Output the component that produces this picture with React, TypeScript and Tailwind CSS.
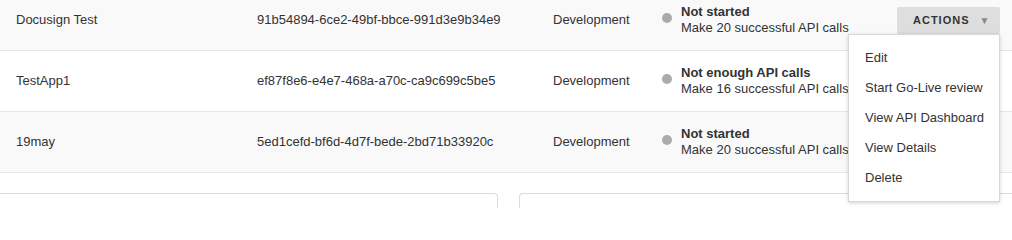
const APPS = [
  { name: 'Docusign Test', id: '91b54894-6ce2-49bf-bbce-991d3e9b34e9', env: 'Development', status: 'Not started', hint: 'Make 20 successful API calls' },
  { name: 'TestApp1', id: 'ef87f8e6-e4e7-468a-a70c-ca9c699c5be5', env: 'Development', status: 'Not enough API calls', hint: 'Make 16 successful API calls' },
  { name: '19may', id: '5ed1cefd-bf6d-4d7f-bede-2bd71b33920c', env: 'Development', status: 'Not started', hint: 'Make 20 successful API calls' },
];

const MENU = ['Edit', 'Start Go-Live review', 'View API Dashboard', 'View Details', 'Delete'];

function ActionsMenu() {
  return (
    <div className="relative">
      <button className="flex h-[27px] w-[103px] items-center gap-[10px] rounded-[2px] bg-[#dedede] pl-4 text-[11px] font-bold tracking-[1px] text-[#333]">
        ACTIONS
        <span className="text-[10px] text-[#888]">▼</span>
      </button>
      {/* dropdown open */}
      <div className="absolute right-0 top-[27px] z-10 w-[152px] border border-[#d8d8d8] bg-white py-[8px] shadow-[0_1px_4px_rgba(0,0,0,0.18)]">
        {MENU.map((item) => (
          <div key={item} className="flex h-[30px] items-center pl-4 text-[13px] text-[#333]">
            {item}
          </div>
        ))}
      </div>
    </div>
  );
}

export default function App() {
  return (
    <div className="h-[208px] w-[1012px] overflow-hidden bg-white font-['Liberation_Sans',Arial,sans-serif] text-[13px] text-[#333]">
      <div className="-mt-[10px]">
        {APPS.map((app, index) => (
          <div
            key={app.id}
            className={`grid h-[61px] grid-cols-[257px_296px_109px_1fr_auto] items-center border-b border-[#e6e6e6] pr-3 ${index % 2 === 0 ? 'bg-[#f9f9f9]' : 'bg-white'}`}
          >
            <div className="pl-4">{app.name}</div>
            <div>{app.id}</div>
            <div>{app.env}</div>
            <div className="flex items-start gap-[9px]">
              <span className="mt-[9px] h-[10px] w-[10px] shrink-0 rounded-full bg-[#ababab]" />
              <div className="leading-[16px]">
                <p className="font-bold">{app.status}</p>
                <p>{app.hint}</p>
              </div>
            </div>
            <div>{index === 0 && <ActionsMenu />}</div>
          </div>
        ))}
      </div>

      <div className="mt-[20px] flex">
        <div className="h-[40px] w-[498px] rounded-tr-[4px] border border-l-0 border-[#dcdcdc]" />
        <div className="ml-[21px] h-[40px] flex-1 rounded-tl-[4px] border border-r-0 border-[#dcdcdc]" />
      </div>
    </div>
  );
}
